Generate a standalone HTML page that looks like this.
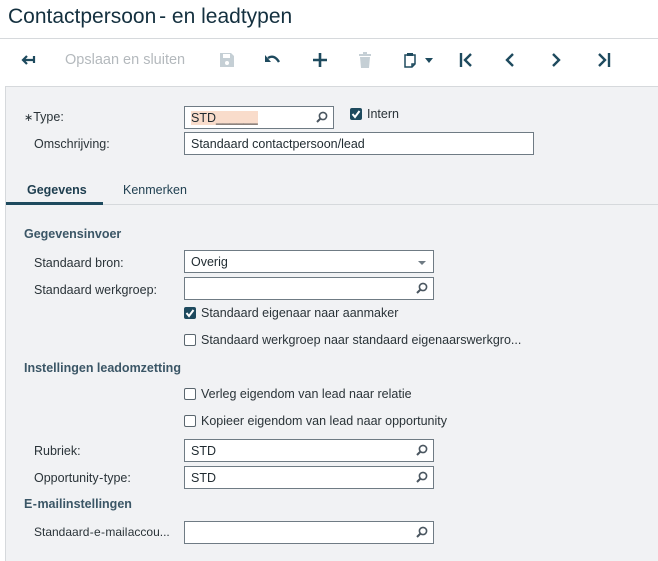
<!DOCTYPE html>
<html><head><meta charset="utf-8"><style>
*{box-sizing:border-box;margin:0;padding:0}
body{width:658px;height:561px;overflow:hidden;background:#fff;font-family:"Liberation Sans",sans-serif;color:#1f2a30;position:relative}
.a{position:absolute;white-space:nowrap}
.title{left:8px;top:5px;font-size:21px;color:#14303f}
.hr{left:0;top:38px;width:658px;height:1px;background:#d6d9dc}
.panel{left:5px;top:86px;width:653px;height:475px;background:#f1f2f4;border-left:1px solid #d6d9dc;border-top:1px solid #d6d9dc}
.lbl{font-size:12.5px;color:#2a3338}
.hdr{font-size:12.5px;font-weight:bold;color:#3b5666}
.inp{background:#fff;border:1px solid #6f7b84;height:23px;font-size:12.5px;padding:4px 6px;color:#1f2a30}
.cb{width:12px;height:12px;border:1px solid #5a666e;border-radius:2px;background:#fff}
.cbx{width:12px;height:12px;border-radius:2px;background:#1e4a5e}
.ws{word-spacing:-3px}
svg.i{position:absolute}
</style></head><body>
<div class="a title"><span class="ws">Contactpersoon -</span> en leadtypen</div>
<div class="a hr"></div>

<svg class="i" style="left:20px;top:53px" width="16" height="14" viewBox="0 0 16 14"><path d="M14 3v7M14 7H4M7 3L3 7l4 4" stroke="#1e4a5e" stroke-width="2.2" fill="none"/></svg>
<div class="a" style="left:65px;top:52px;font-size:14.5px;color:#b4b9bd">Opslaan en sluiten</div>
<svg class="i" style="left:220px;top:53px" width="14" height="14" viewBox="0 0 14 14"><path d="M0 0h11l3 3v11H0z" fill="#c5cfd5"/><rect x="3" y="1" width="7" height="4" fill="#fff"/><circle cx="7" cy="10" r="2" fill="#fff"/></svg>
<svg class="i" style="left:265px;top:55px" width="16" height="10" viewBox="0 0 16 10"><path d="M3 3Q9 -1 14 7" stroke="#1e4a5e" stroke-width="2.4" fill="none"/><path d="M0 0v7h6z" fill="#1e4a5e"/></svg>
<svg class="i" style="left:313px;top:53px" width="14" height="14" viewBox="0 0 14 14"><path d="M7 0v14M0 7h14" stroke="#1e4a5e" stroke-width="2.6"/></svg>
<svg class="i" style="left:359px;top:52px" width="12" height="16" viewBox="0 0 12 16"><rect x="0" y="2" width="12" height="2" fill="#c5cfd5"/><rect x="4" y="0" width="4" height="2" fill="#c5cfd5"/><path d="M1 5h10l-1 11H2z" fill="#c5cfd5"/></svg>
<svg class="i" style="left:404px;top:52px" width="12" height="16" viewBox="0 0 12 16"><path d="M1 3h10v9l-3 3H1z" stroke="#1e4a5e" stroke-width="1.5" fill="none"/><rect x="3" y="1" width="6" height="3" fill="#1e4a5e"/><path d="M8 15v-3h3" stroke="#1e4a5e" stroke-width="1.5" fill="none"/></svg>
<svg class="i" style="left:425px;top:58px" width="8" height="5" viewBox="0 0 8 5"><path d="M0 0h8L4 5z" fill="#1e4a5e"/></svg>
<svg class="i" style="left:459px;top:53px" width="14" height="14" viewBox="0 0 14 14"><path d="M2 0v14" stroke="#1e4a5e" stroke-width="2.4"/><path d="M12 1L6 7l6 6" stroke="#1e4a5e" stroke-width="2.4" fill="none"/></svg>
<svg class="i" style="left:505px;top:53px" width="10" height="14" viewBox="0 0 10 14"><path d="M8 1L2 7l6 6" stroke="#1e4a5e" stroke-width="2.4" fill="none"/></svg>
<svg class="i" style="left:551px;top:53px" width="10" height="14" viewBox="0 0 10 14"><path d="M2 1l6 6-6 6" stroke="#1e4a5e" stroke-width="2.4" fill="none"/></svg>
<svg class="i" style="left:597px;top:53px" width="14" height="14" viewBox="0 0 14 14"><path d="M2 1l6 6-6 6" stroke="#1e4a5e" stroke-width="2.4" fill="none"/><path d="M12 0v14" stroke="#1e4a5e" stroke-width="2.4"/></svg>

<div class="a panel"></div>

<div class="a lbl" style="left:24px;top:110px"><span style="font-size:11px">∗</span>Type:</div>
<div class="a inp" style="left:184px;top:106px;width:150px"><span style="background:#f9dccb">STD______</span></div>
<div class="a cbx" style="left:350px;top:108px"></div>
<svg class="i" style="left:350px;top:108px" width="12" height="12" viewBox="0 0 12 12"><path d="M2.5 6l2.5 3 4.5-6" stroke="#fff" stroke-width="2" fill="none"/></svg>
<div class="a lbl" style="left:367px;top:107px">Intern</div>
<div class="a lbl" style="left:34px;top:137px">Omschrijving:</div>
<div class="a inp" style="left:184px;top:132px;width:350px">Standaard contactpersoon/lead</div>

<div class="a" style="left:6px;top:204px;width:652px;height:1px;background:#d6d9dc"></div>
<div class="a" style="left:6px;top:202px;width:97px;height:3px;background:#1e4a5e"></div>
<div class="a lbl" style="left:27px;top:183px;font-weight:bold;color:#1e3e4f">Gegevens</div>
<div class="a lbl" style="left:123px;top:183px;color:#1e3e4f">Kenmerken</div>

<div class="a hdr" style="left:24px;top:227px">Gegevensinvoer</div>
<div class="a lbl" style="left:34px;top:256px">Standaard bron:</div>
<div class="a inp" style="left:184px;top:250px;width:250px">Overig</div>
<svg class="i" style="left:418px;top:261px" width="8" height="4" viewBox="0 0 8 4"><path d="M0 0h8L4 4z" fill="#6f7b84"/></svg>
<div class="a lbl" style="left:34px;top:283px">Standaard werkgroep:</div>
<div class="a inp" style="left:184px;top:277px;width:250px"></div>

<div class="a cbx" style="left:184px;top:307px"></div>
<svg class="i" style="left:184px;top:307px" width="12" height="12" viewBox="0 0 12 12"><path d="M2.5 6l2.5 3 4.5-6" stroke="#fff" stroke-width="2" fill="none"/></svg>
<div class="a lbl" style="left:201px;top:306px">Standaard eigenaar naar aanmaker</div>
<div class="a cb" style="left:184px;top:334px"></div>
<div class="a lbl" style="left:201px;top:333px">Standaard werkgroep naar standaard eigenaarswerkgro...</div>

<div class="a hdr" style="left:24px;top:361px">Instellingen leadomzetting</div>
<div class="a cb" style="left:184px;top:388px"></div>
<div class="a lbl" style="left:201px;top:387px">Verleg eigendom van lead naar relatie</div>
<div class="a cb" style="left:184px;top:415px"></div>
<div class="a lbl" style="left:201px;top:414px">Kopieer eigendom van lead naar opportunity</div>

<div class="a lbl" style="left:34px;top:444px"><span class="ws">Opportunity - type:</span></div>
<div class="a lbl" style="left:34px;top:444px;display:none"></div>
<div class="a inp" style="left:184px;top:439px;width:250px">STD</div>
<div class="a inp" style="left:184px;top:466px;width:250px">STD</div>
<div class="a hdr ws" style="left:24px;top:497px">E - mailinstellingen</div>
<div class="a lbl ws" style="left:34px;top:525px;font-size:12px">Standaard - e - mail accou...</div>
<div class="a inp" style="left:184px;top:521px;width:250px"></div>

<svg class="i" style="left:316px;top:111px" width="12" height="12" viewBox="0 0 12 12"><circle cx="7" cy="5" r="3.6" stroke="#4a5660" stroke-width="1.6" fill="none"/><path d="M4.5 7.5L1 11" stroke="#4a5660" stroke-width="2"/></svg>
<svg class="i" style="left:416px;top:282px" width="12" height="12" viewBox="0 0 12 12"><circle cx="7" cy="5" r="3.6" stroke="#4a5660" stroke-width="1.6" fill="none"/><path d="M4.5 7.5L1 11" stroke="#4a5660" stroke-width="2"/></svg>
<svg class="i" style="left:416px;top:444px" width="12" height="12" viewBox="0 0 12 12"><circle cx="7" cy="5" r="3.6" stroke="#4a5660" stroke-width="1.6" fill="none"/><path d="M4.5 7.5L1 11" stroke="#4a5660" stroke-width="2"/></svg>
<svg class="i" style="left:416px;top:471px" width="12" height="12" viewBox="0 0 12 12"><circle cx="7" cy="5" r="3.6" stroke="#4a5660" stroke-width="1.6" fill="none"/><path d="M4.5 7.5L1 11" stroke="#4a5660" stroke-width="2"/></svg>
<svg class="i" style="left:416px;top:526px" width="12" height="12" viewBox="0 0 12 12"><circle cx="7" cy="5" r="3.6" stroke="#4a5660" stroke-width="1.6" fill="none"/><path d="M4.5 7.5L1 11" stroke="#4a5660" stroke-width="2"/></svg>
<div class="a lbl" style="left:34px;top:444px;background:#f1f2f4;width:140px">Rubriek:</div>
<div class="a lbl" style="left:34px;top:471px"><span class="ws">Opportunity - type:</span></div>
</body></html>
